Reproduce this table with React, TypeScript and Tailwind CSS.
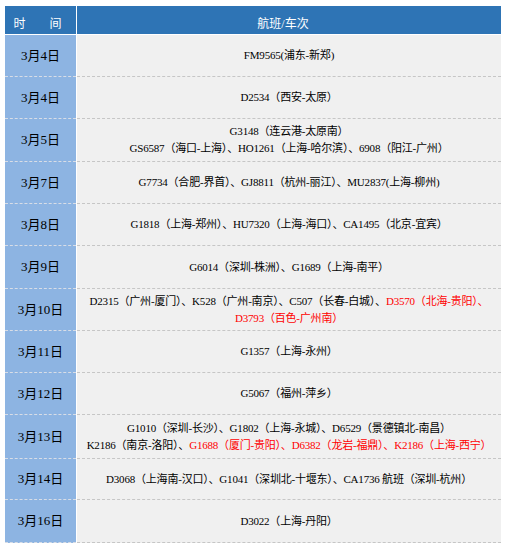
import React from 'react';

type Part = { text: string; red?: boolean };
type Row = { date: string; h: string; lines: Part[][] };

const rows: Row[] = [
  { date: '3月4日', h: 'h-[42px]', lines: [[{ text: 'FM9565(浦东-新郑)' }]] },
  { date: '3月4日', h: 'h-[42px]', lines: [[{ text: 'D2534（西安-太原）' }]] },
  {
    date: '3月5日',
    h: 'h-[43px]',
    lines: [
      [{ text: 'G3148（连云港-太原南）' }],
      [{ text: 'GS6587（海口-上海）、HO1261（上海-哈尔滨）、6908（阳江-广州）' }],
    ],
  },
  { date: '3月7日', h: 'h-[42px]', lines: [[{ text: 'G7734（合肥-界首）、GJ8811（杭州-丽江）、MU2837(上海-柳州)' }]] },
  { date: '3月8日', h: 'h-[42px]', lines: [[{ text: 'G1818（上海-郑州）、HU7320（上海-海口）、CA1495（北京-宜宾）' }]] },
  { date: '3月9日', h: 'h-[43px]', lines: [[{ text: 'G6014（深圳-株洲）、G1689（上海-南平）' }]] },
  {
    date: '3月10日',
    h: 'h-[42px]',
    lines: [
      [
        { text: 'D2315（广州-厦门）、K528（广州-南京）、C507（长春-白城）、' },
        { text: 'D3570（北海-贵阳）、', red: true },
      ],
      [{ text: 'D3793（百色-广州南）', red: true }],
    ],
  },
  { date: '3月11日', h: 'h-[42px]', lines: [[{ text: 'G1357（上海-永州）' }]] },
  { date: '3月12日', h: 'h-[42px]', lines: [[{ text: 'G5067（福州-萍乡）' }]] },
  {
    date: '3月13日',
    h: 'h-[44px]',
    lines: [
      [{ text: 'G1010（深圳-长沙）、G1802（上海-永城）、D6529（景德镇北-南昌）' }],
      [
        { text: 'K2186（南京-洛阳）、' },
        { text: 'G1688（厦门-贵阳）、D6382（龙岩-福鼎）、K2186（上海-西宁）', red: true },
      ],
    ],
  },
  { date: '3月14日', h: 'h-[41px]', lines: [[{ text: 'D3068（上海南-汉口）、G1041（深圳北-十堰东）、CA1736 航班（深圳-杭州）' }]] },
  { date: '3月16日', h: 'h-[43px]', lines: [[{ text: 'D3022（上海-丹阳）' }]] },
];

const font = "font-['Liberation_Serif','Noto_Sans_CJK_SC',serif]";

const App = () => {
  return (
    <div className="min-h-[552px] w-[508px] bg-white pl-[5px] pt-[6px]">
      <div className="w-[496px]">
        {/* Header */}
        <div className={`flex h-[28px] gap-px text-[12px] text-white ${font}`}>
          <div className="flex w-[71px] items-center justify-center bg-[#2e74b5] pt-[8px] pr-[6px]">
            <span>时</span>
            <span className="ml-[24px]">间</span>
          </div>
          <div className="flex flex-1 items-center justify-center bg-[#2e74b5] pt-[8px] pr-[12px]">航班/车次</div>
        </div>

        {/* Rows */}
        <div className="mt-px flex flex-col">
          {rows.map((row, i) => (
            <div key={`row-${i}`} className={`flex gap-px ${row.h}`}>
              <div
                className={`flex w-[71px] items-center justify-center border-b border-dashed border-[#d8dde6] bg-[#8db4e2] text-[13px] text-black ${font}`}
              >
                {row.date}
              </div>
              <div
                className={`flex flex-1 flex-col items-center justify-center border-b border-dashed border-[#c6c6c6] bg-[#f0f0f0] text-[11px] leading-[17px] tracking-[-0.2px] text-black ${font}`}
              >
                {row.lines.map((line, j) => (
                  <div key={`line-${i}-${j}`} className="whitespace-nowrap">
                    {line.map((part, k) => (
                      <span key={`part-${i}-${j}-${k}`} className={part.red ? 'text-[#ff0000]' : ''}>
                        {part.text}
                      </span>
                    ))}
                  </div>
                ))}
              </div>
            </div>
          ))}
        </div>
      </div>
    </div>
  );
};

export default App;
